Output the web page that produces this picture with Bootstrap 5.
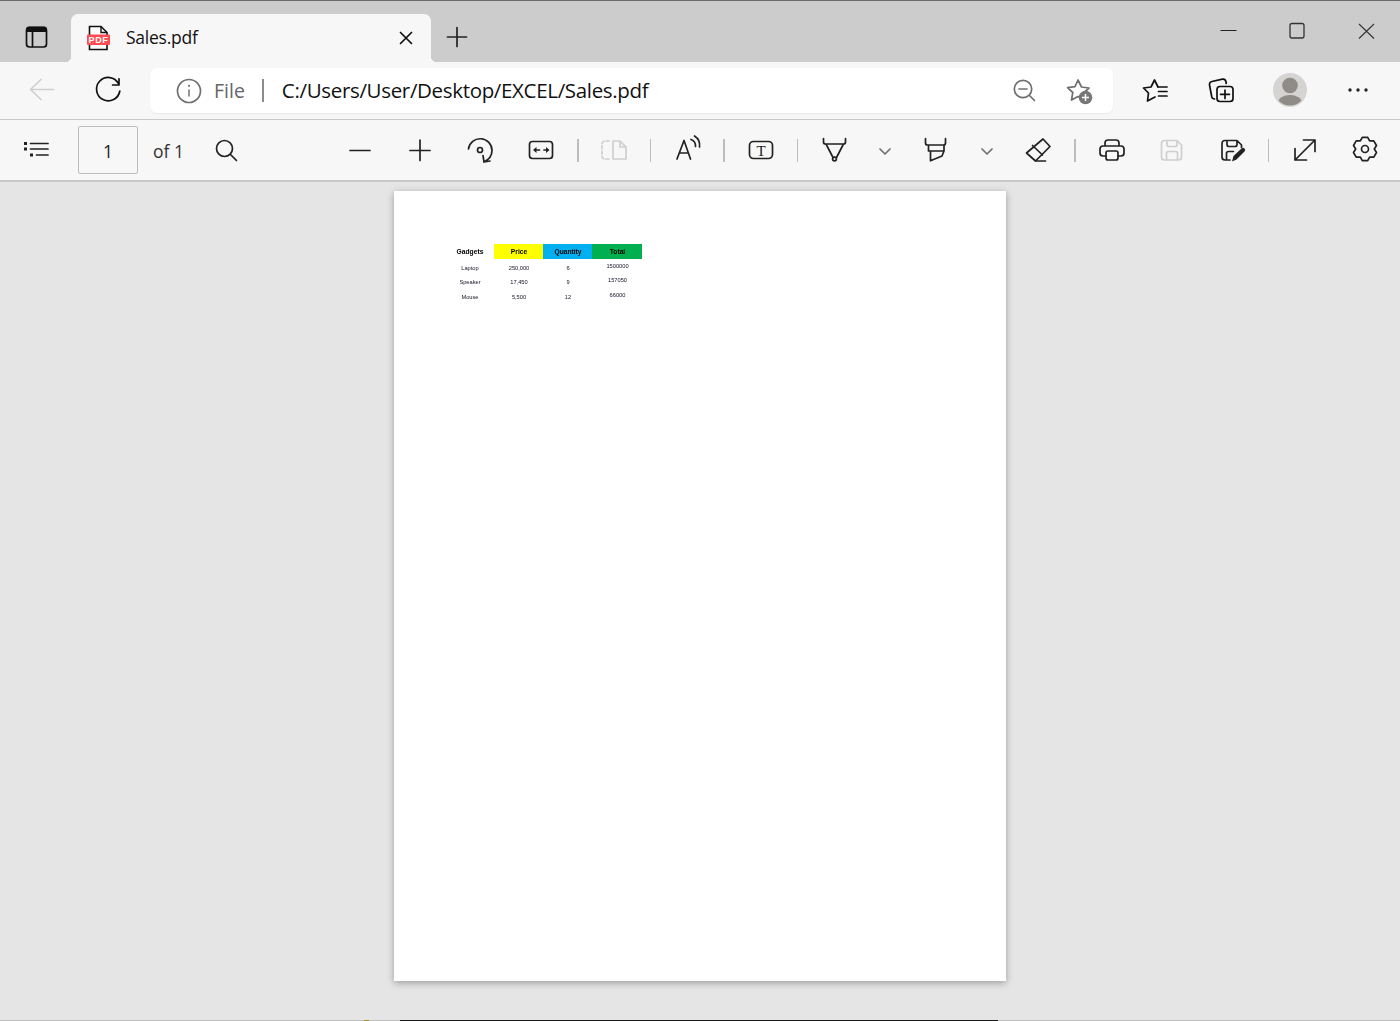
<!DOCTYPE html>
<html lang="en">
<head>
<meta charset="utf-8">
<title>Sales.pdf</title>
<link href="https://cdn.jsdelivr.net/npm/bootstrap@5.3.0/dist/css/bootstrap.min.css" rel="stylesheet">
<style>
html,body{height:1021px;overflow:hidden;background:#e5e5e5}
body{font-family:"Open Sans","Noto Sans",sans-serif;color:#111}
svg{display:block;overflow:visible;flex:none}
.ic{fill:none;stroke:#222;stroke-width:1.7;stroke-linecap:round;stroke-linejoin:round}
.ic-k{stroke:#111}
.ic-g{stroke:#707070}
.ic-off{stroke:#cfcfcf}
.shell{height:1021px}
.strip{height:62px;background:#ccc;border-top:1px solid #6b6b6b;padding-top:13px}
.side-btn{width:71px;height:48px}
.edge-tab{width:360px;height:48px;background:#f7f7f7;border-radius:7px 7px 0 0;padding-left:14px;padding-right:18px}
.edge-tab::before,.edge-tab::after{content:"";position:absolute;bottom:0;width:6px;height:6px}
.edge-tab::before{left:-6px;background:radial-gradient(circle at 0 0,transparent 6px,#f7f7f7 6.5px)}
.edge-tab::after{right:-6px;background:radial-gradient(circle at 100% 0,transparent 6px,#f7f7f7 6.5px)}
.tab-name{font-size:17.5px;margin-left:15px;letter-spacing:-.25px;padding-bottom:2px}
.new-btn{width:50px;height:48px}
.win-btn{width:69px;height:36px}
.addr{height:58px;background:#f7f7f7;border-bottom:1px solid #c8c8c8;padding-bottom:1px}
.addr-first{width:84px}
.addr-reload{width:48px;margin-right:18px}
.omni{width:963px;height:45px;background:#fff;border-radius:7px;box-shadow:0 1px 2px rgba(0,0,0,.06);padding-left:24px;padding-right:20px}
.omni-file{font-size:19.5px;color:#666;margin-left:10px;padding-top:2px}
.omni-sep{width:2px;height:23px;background:#8c8c8c;margin:0 18px 0 17px}
.omni-url{font-size:20.5px;color:#111;letter-spacing:-.33px;white-space:nowrap}
.abtn-a{width:60px;height:50px;margin-left:12px}
.abtn-b{width:60px;height:50px;margin-left:6px}
.abtn-c{width:66px;height:50px;margin-left:6px}
.abtn-d{width:66px;height:50px;margin-left:2px}
.tool{height:62px;background:#f7f7f7;border-bottom:2px solid #c9c9c9;padding:0 0 0 6px}
.tbtn{width:60px;height:60px}
.tbtn61{width:61px;height:60px}
.chev{width:42px;height:60px}
.vsep{width:13px;height:60px}
.vsep i{display:block;width:1px;height:23px;background:#bdbdbd}
.vsep i.wide{width:2px}
.page-box{width:60px;height:48px;border:1px solid #bdbdbd;border-radius:2px;background:#f7f7f7;font-size:17.5px;color:#222;margin-left:12px;padding-top:2px}
.of-label{font-size:17.5px;color:#333;width:43px;margin-left:15px;white-space:nowrap;padding-top:2px}
.gap-z{width:74px}
.stage{background:#e5e5e5;padding-top:9px;min-height:0}
.sheet{width:612px;height:790px;background:#fff;box-shadow:0 2px 7px rgba(0,0,0,.32);padding:53px 0 0 51px}
.xl{font-family:"Liberation Sans",sans-serif;font-size:5.7px;color:#14142a;width:197px;filter:blur(.25px)}
.xl-row{height:14.5px}
.xl-head{height:15px;font-weight:700;font-size:6.7px;color:#000;margin-bottom:0}
.xl-cell{width:49px;height:100%;padding-top:3.5px;padding-left:1px}
.xl-w{width:50px}
.xl-up{padding-top:0;padding-bottom:0}
.xl-head .xl-cell{padding-top:1px;padding-bottom:0}
.c-y{background:#ff0}
.c-b{background:#00b0f0}
.c-g{background:#00b050}
.taskline{height:1px;background:#c0c0c0}
.task-speck{width:5px;background:#a8901f;margin-left:364px}
.task-dark{width:598px;background:#1a1a1a;margin-left:31px}
</style>
</head>
<body>
<div class="shell d-flex flex-column">

  <div class="strip d-flex align-items-start flex-shrink-0">
    <div class="side-btn d-flex align-items-center justify-content-center">
      <svg width="30" height="30" viewBox="20.500 23 30 30"><rect class="ic ic-k" x="26" y="27.500" width="20" height="19.500" rx="3" stroke-width="2"/><path d="M25.500 32v-2.500a3 3 0 0 1 3-3h15a3 3 0 0 1 3 3V32z" fill="#111"/><path class="ic ic-k" d="M32 31v15.500"/></svg>
    </div>
    <div class="edge-tab position-relative d-flex align-items-center">
      <svg width="26" height="28" viewBox="85 24 26 28"><path d="M89.500 26.500h11.500l6 6v17H89.500z" fill="#fff" stroke="#111" stroke-width="1.600"/><path d="M101 26.500v6h6" fill="none" stroke="#111" stroke-width="1.400"/><rect x="87" y="34.500" width="23" height="10.500" rx="1" fill="#ff4b52"/><text x="98.500" y="43" text-anchor="middle" font-family="Liberation Sans,sans-serif" font-weight="700" font-size="9" letter-spacing=".6" fill="#fff">PDF</text></svg>
      <span class="tab-name flex-grow-1">Sales.pdf</span>
      <svg width="14" height="14" viewBox="399 31 14 14"><path class="ic ic-k" d="M400.500 32.500l11 11M411.500 32.500l-11 11" stroke-width="1.800"/></svg>
    </div>
    <div class="new-btn d-flex align-items-center justify-content-center">
      <svg width="22" height="22" viewBox="445 27 22 22"><path class="ic" d="M457 27.500v19M447.500 37h19" stroke-width="1.800"/></svg>
    </div>
    <div class="ms-auto d-flex">
      <div class="win-btn d-flex align-items-center justify-content-center"><svg width="18" height="18" viewBox="1219.500 23 18 18"><path d="M1221 30.500h16" stroke="#222" stroke-width="1"/></svg></div>
      <div class="win-btn d-flex align-items-center justify-content-center"><svg width="18" height="18" viewBox="1288.500 23 18 18"><rect x="1290.500" y="23.500" width="14" height="14.500" rx="2" fill="none" stroke="#333" stroke-width="1.300"/></svg></div>
      <div class="win-btn d-flex align-items-center justify-content-center"><svg width="18" height="18" viewBox="1357.500 23 18 18"><path d="M1359.500 24l15 14.500M1374.500 24l-15 14.500" stroke="#333" stroke-width="1.100"/></svg></div>
    </div>
  </div>

  <div class="addr d-flex align-items-center flex-shrink-0">
    <div class="addr-first d-flex align-items-center justify-content-center">
      <svg width="30" height="30" viewBox="27 75 30 30"><path class="ic ic-off" d="M30.500 89.500h23M41 79.500l-10.500 10 10.500 10"/></svg>
    </div>
    <div class="addr-reload d-flex align-items-center justify-content-center">
      <svg width="30" height="30" viewBox="93 75 30 30"><path class="ic ic-k" d="M118.500 83.500A11.700 11.700 0 1 0 119.800 91M119 78.800v6.200h-6.400" stroke-width="1.600"/></svg>
    </div>
    <div class="omni d-flex align-items-center">
      <svg width="30" height="30" viewBox="174 75 30 30"><circle class="ic ic-g" cx="189" cy="91" r="11.500" stroke-width="1.400"/><path d="M189 89.500v7" stroke="#707070" stroke-width="1.500"/><circle cx="189" cy="85.800" r="1.100" fill="#707070"/></svg>
      <span class="omni-file">File</span>
      <span class="omni-sep"></span>
      <span class="omni-url flex-grow-1">C:/Users/User/Desktop/EXCEL/Sales.pdf</span>
      <svg width="30" height="30" viewBox="1009 75 30 30" class="me-4"><circle class="ic ic-g" cx="1023" cy="89" r="8.700" stroke-width="1.400"/><path class="ic ic-g" d="M1019 89h8M1029.500 95.500l5 5" stroke-width="1.400"/></svg>
      <svg width="30" height="30" viewBox="1063 75 30 30"><path class="ic ic-g" d="M1078 80l3.500 7 7.500 1-5.500 5 1 7-6.500-3.500-6.500 3.500 1.300-7.500-5.300-4.800 7.500-1z" stroke-width="1.400"/><circle cx="1085.500" cy="97.500" r="6.800" fill="#777"/><path d="M1085.500 94v7M1082 97.500h7" stroke="#fff" stroke-width="1.500"/></svg>
    </div>
    <div class="abtn-a d-flex align-items-center justify-content-center">
      <svg width="30" height="30" viewBox="1140 75 30 30"><path class="ic ic-k" d="M1158 87l-3.500-7-3.500 7-7.500 1 5 5-1 8 7.500-4" stroke-width="1.700"/><path class="ic ic-k" d="M1158.500 87h8.500M1158.500 91.500h8.500M1158.500 96h8.500" stroke-width="1.500" stroke-linecap="butt"/></svg>
    </div>
    <div class="abtn-b d-flex align-items-center justify-content-center">
      <svg width="30" height="30" viewBox="1206 75 30 30"><path class="ic ic-k" d="M1214.500 99l-1.500-.5a2.500 2.500 0 0 1-1.200-1.500l-2.300-12a3 3 0 0 1 2.400-3.500l10.500-2.300a3 3 0 0 1 3.500 2.300l.3 2" stroke-width="1.600"/><rect class="ic ic-k" x="1217" y="86.500" width="16" height="15" rx="3" stroke-width="1.700"/><path class="ic ic-k" d="M1225 90v8.500M1220.500 94.300h9" stroke-width="1.500"/></svg>
    </div>
    <div class="abtn-c d-flex align-items-center justify-content-center">
      <svg width="34" height="34" viewBox="1273 73 34 34"><defs><clipPath id="av"><circle cx="1290" cy="90" r="15.500"/></clipPath></defs><circle cx="1290" cy="90" r="17" fill="#d6d4d2"/><circle cx="1290" cy="85.500" r="7.800" fill="#8f8b87"/><ellipse cx="1290" cy="103" rx="12" ry="8" fill="#8f8b87" clip-path="url(#av)"/></svg>
    </div>
    <div class="abtn-d d-flex align-items-center justify-content-center">
      <svg width="24" height="8" viewBox="1346.500 86 24 8"><circle cx="1350.500" cy="90" r="1.700" fill="#222"/><circle cx="1358.500" cy="90" r="1.700" fill="#222"/><circle cx="1366.500" cy="90" r="1.700" fill="#222"/></svg>
    </div>
  </div>

  <div class="tool d-flex align-items-center flex-shrink-0">
    <div class="tbtn d-flex align-items-center justify-content-center"><svg width="30" height="30" viewBox="21 135 30 30"><path class="ic" d="M30.500 143.500h17.500M30.500 149h17.500M36.500 155h11.500" stroke-width="1.700" stroke-linecap="butt"/><rect x="24" y="142" width="3" height="3" fill="#222"/><rect x="24" y="147.500" width="3" height="3" fill="#222"/><rect x="30" y="153.500" width="3" height="3" fill="#222"/></svg></div>
    <div class="page-box d-flex align-items-center justify-content-center">1</div>
    <div class="of-label">of 1</div>
    <div class="tbtn d-flex align-items-center justify-content-center"><svg width="30" height="30" viewBox="211 135 30 30"><circle class="ic" cx="224.500" cy="148.500" r="8" stroke-width="1.700"/><path class="ic" d="M230.500 154.500l6 6" stroke-width="1.700"/></svg></div>
    <div class="gap-z"></div>
    <div class="tbtn d-flex align-items-center justify-content-center"><svg width="30" height="30" viewBox="345 135 30 30"><path class="ic" d="M350 150.500h20"/></svg></div>
    <div class="tbtn d-flex align-items-center justify-content-center"><svg width="30" height="30" viewBox="405 135 30 30"><path class="ic" d="M420 140v20.500M410 150.500h20"/></svg></div>
    <div class="tbtn d-flex align-items-center justify-content-center"><svg width="30" height="30" viewBox="465 135 30 30"><path class="ic" d="M468.500 149a11.800 11.800 0 0 1 23.500 1.500c0 5-3 9-8 11.500M483 155.500l1 6.500 6-1"/><circle class="ic" cx="480" cy="150" r="2.500"/></svg></div>
    <div class="tbtn61 d-flex align-items-center justify-content-center"><svg width="30" height="30" viewBox="526 135 30 30"><rect class="ic" x="529.500" y="141.500" width="23" height="17" rx="3"/><path class="ic" d="M536 150h3.500M544 150h3" stroke-width="1.400"/><path d="M533 150l3.500-3v6zM549.500 150l-3.500-3v6z" fill="#222"/></svg></div>
    <div class="vsep d-flex align-items-center justify-content-center"><i class="wide"></i></div>
    <div class="tbtn d-flex align-items-center justify-content-center"><svg width="30" height="30" viewBox="599 135 30 30"><path class="ic ic-off" d="M609 141h-4a3 3 0 0 0-3 3v12a3 3 0 0 0 3 3h4" stroke-dasharray="3 2.200"/><path class="ic ic-off" d="M613 141h7l6 6v12h-13zM620 141v6h6"/></svg></div>
    <div class="vsep d-flex align-items-center justify-content-center"><i></i></div>
    <div class="tbtn d-flex align-items-center justify-content-center"><svg width="30" height="30" viewBox="672 135 30 30"><path class="ic" d="M677 159l7-18.500 6.500 18.500M679.500 153h9" stroke-width="1.500"/><path class="ic" d="M691 139.500a7 7 0 0 1 4.500 7M694.500 136a11 11 0 0 1 5 11" stroke-width="1.500"/></svg></div>
    <div class="vsep d-flex align-items-center justify-content-center"><i class="wide"></i></div>
    <div class="tbtn61 d-flex align-items-center justify-content-center"><svg width="30" height="30" viewBox="746 135 30 30"><rect class="ic" x="749.500" y="141.500" width="23" height="17" rx="4"/><text x="761" y="155.500" text-anchor="middle" font-family="Liberation Serif,serif" font-size="15" fill="#222">T</text></svg></div>
    <div class="vsep d-flex align-items-center justify-content-center"><i></i></div>
    <div class="tbtn d-flex align-items-center justify-content-center"><svg width="30" height="30" viewBox="819 135 30 30"><path class="ic" d="M823.500 138.500v3.500a2 2 0 0 0 2 2h18a2 2 0 0 0 2-2v-3.500M826.500 145l6.500 12.500M843 145l-6.500 12.500"/><circle class="ic" cx="834.500" cy="159" r="1.900" stroke-width="1.400"/></svg></div>
    <div class="chev d-flex align-items-center justify-content-center"><svg width="14" height="10" viewBox="878 145 14 10"><path class="ic ic-g" d="M880 149l5 5 5-5" stroke-width="1.200"/></svg></div>
    <div class="tbtn d-flex align-items-center justify-content-center"><svg width="30" height="30" viewBox="921 135 30 30"><path class="ic" d="M925.500 138.500v4.500a2 2 0 0 0 2 2h16a2 2 0 0 0 2-2v-4.500M928.500 146v5h15.500v-5M930.500 151v9.800l11.500-4.800 2-5"/></svg></div>
    <div class="chev d-flex align-items-center justify-content-center"><svg width="14" height="10" viewBox="980 145 14 10"><path class="ic ic-g" d="M982 149l5 5 5-5" stroke-width="1.200"/></svg></div>
    <div class="tbtn d-flex align-items-center justify-content-center"><svg width="30" height="30" viewBox="1023 135 30 30"><path class="ic" d="M1043 139l7 7.500-14.500 14.500-9-8zM1032.500 145.500l10 9.500M1035.500 161h10"/></svg></div>
    <div class="vsep d-flex align-items-center justify-content-center"><i class="wide"></i></div>
    <div class="tbtn61 d-flex align-items-center justify-content-center"><svg width="30" height="30" viewBox="1097 135 30 30"><path class="ic" d="M1105 146v-3a3 3 0 0 1 3-3h8a3 3 0 0 1 3 3v3M1106 156h-3a3 3 0 0 1-3-3v-4a3 3 0 0 1 3-3h18a3 3 0 0 1 3 3v4a3 3 0 0 1-3 3h-3"/><rect class="ic" x="1106" y="151" width="12" height="9" rx="2"/></svg></div>
    <div class="tbtn d-flex align-items-center justify-content-center"><svg width="30" height="30" viewBox="1157 135 30 30"><path class="ic ic-off" d="M1165 140.500h12l4.500 4.500v12a3 3 0 0 1-3 3h-14a3 3 0 0 1-3-3v-13.500a3 3 0 0 1 3-3zM1167 140.500v4a2 2 0 0 0 2 2h6a2 2 0 0 0 2-2v-4M1166.500 160v-6.500a2 2 0 0 1 2-2h7a2 2 0 0 1 2 2v6.500" stroke-width="1.600"/></svg></div>
    <div class="tbtn d-flex align-items-center justify-content-center"><svg width="30" height="30" viewBox="1217 135 30 30"><path class="ic" d="M1230 160h-5a3 3 0 0 1-3-3v-13.500a3 3 0 0 1 3-3h12l4.500 4.500v2.500M1227 140.500v4a2 2 0 0 0 2 2h6a2 2 0 0 0 2-2v-4M1226.500 160v-6.500a2 2 0 0 1 2-2h5" stroke-width="1.600"/><path d="M1232 161.500l1.500-5.500 8-7.500a2 2 0 0 1 3 3l-8 8z" fill="#222"/></svg></div>
    <div class="vsep d-flex align-items-center justify-content-center"><i></i></div>
    <div class="tbtn d-flex align-items-center justify-content-center"><svg width="30" height="30" viewBox="1290 135 30 30"><path class="ic" d="M1295 160l20-20M1303.500 140h11.500v11.500M1295 148.500V160h11.500"/></svg></div>
    <div class="tbtn d-flex align-items-center justify-content-center"><svg width="30" height="30" viewBox="1350 135 30 30"><g transform="translate(1365 149)"><path class="ic" d="M-2.700-11.700H2.700L4.650-8.050 8.780-8.180 11.480-3.510 9.300 0 11.480 3.510 8.780 8.180 4.650 8.050 2.700 11.700H-2.700L-4.650 8.050-8.780 8.180-11.480 3.510-9.300 0-11.480-3.510-8.780-8.180-4.650-8.050z" stroke-width="1.500"/><circle class="ic" cx="0" cy="0" r="3.500" stroke-width="1.500"/></g></svg></div>
  </div>

  <div class="stage flex-grow-1 d-flex justify-content-center align-items-start">
    <div class="sheet">
      <div class="xl">
        <div class="xl-row xl-head d-flex text-center">
          <div class="xl-cell d-flex align-items-center justify-content-center">Gadgets</div>
          <div class="xl-cell c-y d-flex align-items-center justify-content-center">Price</div>
          <div class="xl-cell c-b d-flex align-items-center justify-content-center">Quantity</div>
          <div class="xl-cell xl-w c-g d-flex align-items-center justify-content-center">Total</div>
        </div>
        <div class="xl-row d-flex text-center">
          <div class="xl-cell d-flex align-items-center justify-content-center">Laptop</div>
          <div class="xl-cell d-flex align-items-center justify-content-center">250,000</div>
          <div class="xl-cell d-flex align-items-center justify-content-center">6</div>
          <div class="xl-cell xl-w xl-up d-flex align-items-center justify-content-center">1500000</div>
        </div>
        <div class="xl-row d-flex text-center">
          <div class="xl-cell d-flex align-items-center justify-content-center">Speaker</div>
          <div class="xl-cell d-flex align-items-center justify-content-center">17,450</div>
          <div class="xl-cell d-flex align-items-center justify-content-center">9</div>
          <div class="xl-cell xl-w xl-up d-flex align-items-center justify-content-center">157050</div>
        </div>
        <div class="xl-row d-flex text-center">
          <div class="xl-cell d-flex align-items-center justify-content-center">Mouse</div>
          <div class="xl-cell d-flex align-items-center justify-content-center">5,500</div>
          <div class="xl-cell d-flex align-items-center justify-content-center">12</div>
          <div class="xl-cell xl-w xl-up d-flex align-items-center justify-content-center">66000</div>
        </div>
      </div>
    </div>
  </div>

  <div class="taskline d-flex flex-shrink-0"><span class="task-speck"></span><span class="task-dark"></span></div>
</div>
<script src="https://cdn.jsdelivr.net/npm/bootstrap@5.3.0/dist/js/bootstrap.bundle.min.js"></script>
</body>
</html>
